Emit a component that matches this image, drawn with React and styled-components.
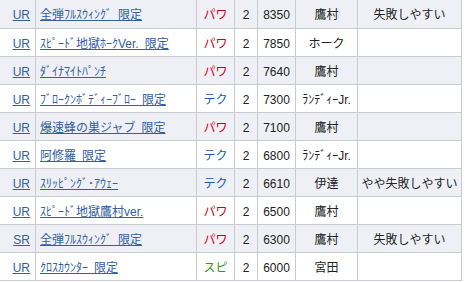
import React from "react";
import styled, { createGlobalStyle } from "styled-components";

const Global = createGlobalStyle`
  html, body { margin: 0; padding: 0; background: #fff; }
  body { font-family: "Liberation Sans", "Noto Sans CJK JP", sans-serif; font-size: 12px; color: #222; }
`;

const Table = styled.div`
  width: 462px;
  display: flex;
  flex-direction: column;
`;

const Row = styled.div`
  display: grid;
  grid-template-columns: 36px 161px 38px 23px 38px 62px 104px;
  height: ${(p) => (p.$first ? 29 : 28)}px;
  background: ${(p) => (p.$shade ? "#eef0f5" : "#ffffff")};
  border-bottom: 1px solid #c9cbd0;
  box-sizing: border-box;
`;

const Cell = styled.div`
  box-sizing: border-box;
  border-right: 1px solid #c9cbd0;
  display: flex;
  align-items: center;
  justify-content: ${(p) => p.$align || "center"};
  padding: 2px ${(p) => p.$pr || 0}px 0 ${(p) => p.$pl || 0}px;
  white-space: pre;
  overflow: hidden;
  line-height: 1;
`;

const Link = styled.a`
  color: #34609f;
  text-decoration: underline;
  cursor: pointer;
`;

const TYPE_COLORS = { パワ: "#cc0022", テク: "#2255bb", スピ: "#339900" };

const Type = styled.span`
  color: ${(p) => TYPE_COLORS[p.$t]};
`;

const S = "\u2002";

const rows = [
  ["UR", `全弾ﾌﾙｽｳｨﾝｸﾞ${S}限定`, "パワ", "2", "8350", "鷹村", "失敗しやすい"],
  ["UR", `ｽﾋﾟｰﾄﾞ地獄ﾎｰｸVer.${S}限定`, "パワ", "2", "7850", "ホーク", ""],
  ["UR", "ﾀﾞｲﾅﾏｲﾄﾊﾟﾝﾁ", "パワ", "2", "7640", "鷹村", ""],
  ["UR", `ﾌﾞﾛｰｸﾝﾎﾞﾃﾞｨｰﾌﾞﾛｰ${S}限定`, "テク", "2", "7300", "ﾗﾝﾃﾞｨｰJr.", ""],
  ["UR", `爆速蜂の巣ジャブ${S}限定`, "パワ", "2", "7100", "鷹村", ""],
  ["UR", `阿修羅${S}限定`, "テク", "2", "6800", "ﾗﾝﾃﾞｨｰJr.", ""],
  ["UR", "ｽﾘｯﾋﾟﾝｸﾞ･ｱｳｪｰ", "テク", "2", "6610", "伊達", "やや失敗しやすい"],
  ["UR", "ｽﾋﾟｰﾄﾞ地獄鷹村ver.", "パワ", "2", "6500", "鷹村", ""],
  ["SR", `全弾ﾌﾙｽｳｨﾝｸﾞ${S}限定`, "パワ", "2", "6300", "鷹村", "失敗しやすい"],
  ["UR", `ｸﾛｽｶｳﾝﾀｰ${S}限定`, "スピ", "2", "6000", "宮田", ""],
];

export default function App() {
  return (
    <>
      <Global />
      <Table>
        {rows.map((r, i) => (
          <Row key={i} $first={i === 0} $shade={i % 2 === 0}>
            <Cell $align="flex-end" $pr={5}>
              <Link>{r[0]}</Link>
            </Cell>
            <Cell $align="flex-start" $pl={4}>
              <Link>{r[1]}</Link>
            </Cell>
            <Cell>
              <Type $t={r[2]}>{r[2]}</Type>
            </Cell>
            <Cell>{r[3]}</Cell>
            <Cell>{r[4]}</Cell>
            <Cell>{r[5]}</Cell>
            <Cell>{r[6]}</Cell>
          </Row>
        ))}
      </Table>
    </>
  );
}
